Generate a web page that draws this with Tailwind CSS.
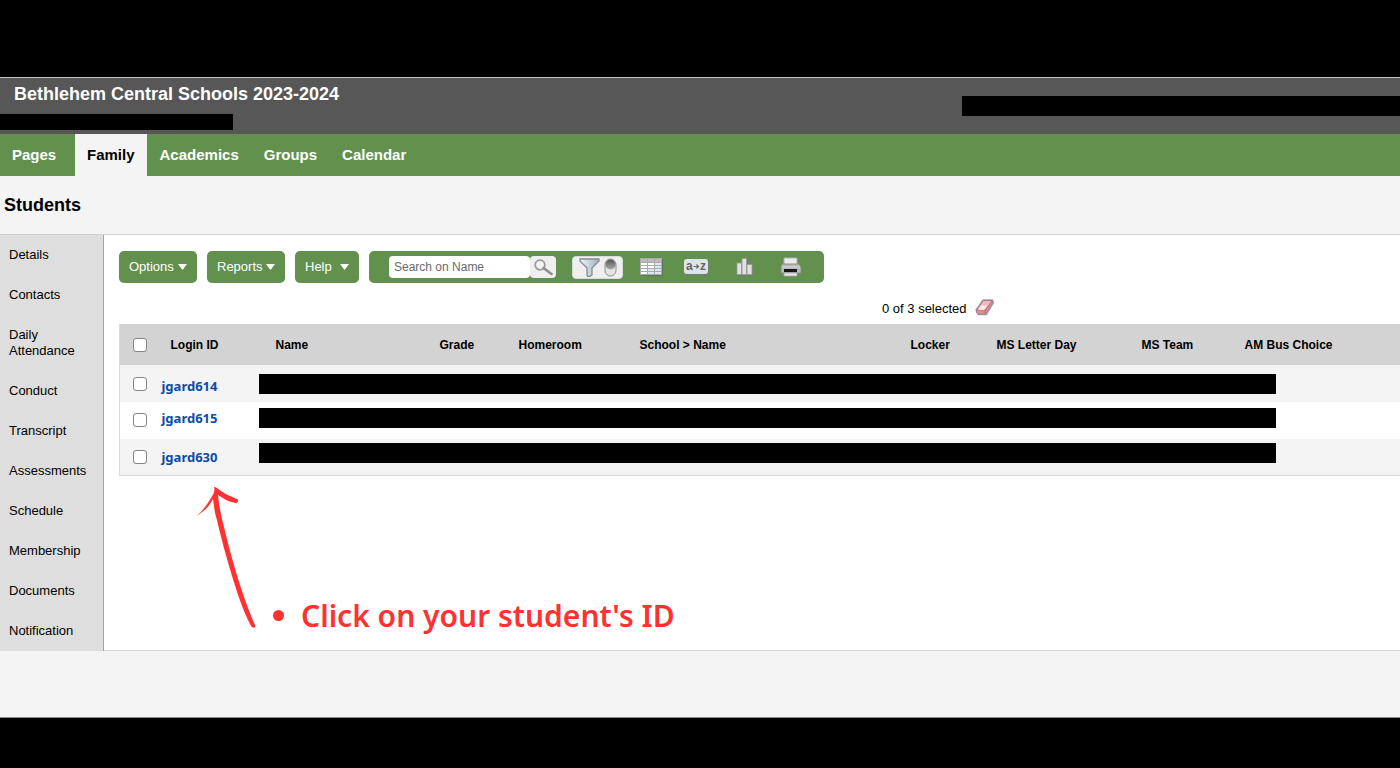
<!DOCTYPE html>
<html lang="en">

<head>
    <meta charset="UTF-8">
    <meta name="viewport" content="width=device-width, initial-scale=1.0">
    <title>Bethlehem Central Schools 2023-2024</title>
    <script src="https://cdn.jsdelivr.net/npm/@tailwindcss/browser@4"></script>
</head>

<body class="bg-black text-black min-h-screen flex flex-col pt-[77px] pb-[50px] font-['Liberation_Sans',Arial,sans-serif]">

    <!-- Header -->
    <header class="bg-[#575757] border-t border-[#c4c4c4] flex justify-between items-start pb-1">
        <div>
            <h1 class="text-white text-[18px] leading-8 font-bold pl-3.5">Bethlehem Central Schools 2023-2024</h1>
            <div class="bg-black w-[233px] h-4 mt-1"></div>
        </div>
        <div class="bg-black w-[438px] h-5 mt-[18px]"></div>
    </header>

    <!-- Top tabs -->
    <nav class="bg-[#62914e] flex text-white text-[15px] leading-[42px] font-bold">
        <a href="#" class="pl-3 w-[75px]">Pages</a>
        <a href="#" class="px-3 bg-[#f4f4f4] text-black">Family</a>
        <a href="#" class="pl-[13px] pr-[25px]">Academics</a>
        <a href="#" class="pr-[25px]">Groups</a>
        <a href="#">Calendar</a>
    </nav>

    <div class="bg-[#f4f4f4] border-b border-[#8a8a8a] grow">
        <h2 class="text-[18px] leading-[58px] font-bold pl-1">Students</h2>

        <div class="flex border-t border-[#cfcfcf]">
            <!-- Side tabs -->
            <nav class="w-[104px] shrink-0 bg-[#dedede] border-r border-[#a3a3a3] text-[13px] leading-4 flex flex-col">
                <a href="#" class="py-3 pl-[9px]">Details</a>
                <a href="#" class="py-3 pl-[9px]">Contacts</a>
                <a href="#" class="py-3 pl-[9px]">Daily Attendance</a>
                <a href="#" class="py-3 pl-[9px]">Conduct</a>
                <a href="#" class="py-3 pl-[9px]">Transcript</a>
                <a href="#" class="py-3 pl-[9px]">Assessments</a>
                <a href="#" class="py-3 pl-[9px]">Schedule</a>
                <a href="#" class="py-3 pl-[9px]">Membership</a>
                <a href="#" class="py-3 pl-[9px]">Documents</a>
                <a href="#" class="py-3 pl-[9px]">Notification</a>
            </nav>

            <main class="grow bg-white border-b border-[#d4d4d4] pt-4 pl-[15px]">
                <!-- Toolbar -->
                <div class="flex gap-2.5 text-[13px] text-white">
                    <button class="bg-[#62914e] rounded-[5px] h-8 w-[78px] flex items-center justify-between px-2.5">Options
                        <svg class="w-[9px] h-[6px]" viewBox="0 0 9 6"><path fill="#fff" d="M0 0h9L4.500 6z" /></svg>
                    </button>
                    <button class="bg-[#62914e] rounded-[5px] h-8 w-[78px] flex items-center justify-between px-2.5">Reports
                        <svg class="w-[9px] h-[6px]" viewBox="0 0 9 6"><path fill="#fff" d="M0 0h9L4.500 6z" /></svg>
                    </button>
                    <button class="bg-[#62914e] rounded-[5px] h-8 w-16 flex items-center justify-between px-2.5">Help
                        <svg class="w-[9px] h-[6px]" viewBox="0 0 9 6"><path fill="#fff" d="M0 0h9L4.500 6z" /></svg>
                    </button>

                    <div class="bg-[#62914e] rounded-[5px] h-8 w-[455px] flex items-center pl-5">
                        <input type="text" aria-label="Search on Name" placeholder="Search on Name"
                            class="bg-white w-[141px] h-[22px] rounded-[4px] px-[5px] text-[12px] text-black placeholder:text-[#6b6b6b]">
                        <button aria-label="Search" class="bg-[#efefef] w-[26px] h-[22px] rounded-[4px] flex items-center justify-center">
                            <svg class="w-5 h-[17px]" viewBox="0 0 20 17">
                                <circle cx="7" cy="6" r="4.800" fill="#f4f4f4" stroke="#9b9b9b" stroke-width="1.800" />
                                <path d="M10.500 9l8 6" stroke="#8e8e8e" stroke-width="2.600" stroke-linecap="round" />
                            </svg>
                        </button>
                        <button aria-label="Filter" class="bg-[#efefef] w-[51px] h-[23px] rounded-[4px] border border-[#dadada] ml-4 flex items-center justify-center gap-1">
                            <svg class="w-[21px] h-[19px]" viewBox="0 0 21 19">
                                <defs>
                                    <linearGradient id="funnel">
                                        <stop offset="0" stop-color="#f3f7f9" />
                                        <stop offset="1" stop-color="#9fb0ba" />
                                    </linearGradient>
                                    <linearGradient id="knob" x2="0" y2="1">
                                        <stop offset="0" stop-color="#555" />
                                        <stop offset="1" stop-color="#aaa" />
                                    </linearGradient>
                                </defs>
                                <path d="M1 1h19v2l-7 7v7l-2 1.300H8.500L8 17v-7L1 3z" fill="url(#funnel)" stroke="#848c90" stroke-width="1.300" />
                            </svg>
                            <svg class="w-[13px] h-[19px]" viewBox="0 0 13 19">
                                <rect x="1" y="1" width="11" height="17" rx="5.500" fill="#e3e3e3" stroke="#8c8c8c" />
                                <circle cx="6.500" cy="6.500" r="5" fill="url(#knob)" />
                            </svg>
                        </button>
                        <button aria-label="Field set" class="ml-[17px]">
                            <svg class="w-6 h-[18px]" viewBox="0 0 24 18">
                                <path d="M1 1h22v17H1z" fill="#62725c" />
                                <path d="M0 0h22v17H0z" fill="#a9aaaa" />
                                <path d="M1 1h6v3H1zM8 1h6v3H8zM15 1h6v3h-6z" fill="#bcbcbc" />
                                <path d="M1 5h6v2H1zM8 5h6v2H8zM1 8h6v2H1zM8 8h6v2H8zM1 11h6v2H1zM1 14h6v2H1z" fill="#fff" />
                                <path d="M15 5h6v2h-6zM15 8h6v2h-6zM8 11h6v2H8zM15 11h6v2h-6zM8 14h6v2H8zM15 14h6v2h-6z" fill="#dbe9f2" />
                            </svg>
                        </button>
                        <button aria-label="Sort order" class="ml-5">
                            <svg class="w-[26px] h-[17px]" viewBox="0 0 26 17">
                                <rect x="1" y="1" width="24" height="16" rx="3" fill="#71806c" />
                                <rect width="24" height="15" rx="3" fill="#dce4e8" />
                                <text x="2" y="11" font-size="12" font-weight="bold" fill="#666">a</text>
                                <path d="M9.500 7.500h5M12.500 5.500l2 2-2 2" fill="none" stroke="#666" stroke-width="1.200" />
                                <text x="16" y="11" font-size="12" font-weight="bold" fill="#666">z</text>
                            </svg>
                        </button>
                        <button aria-label="Charts" class="ml-[26px]">
                            <svg class="w-[18px] h-[18px]" viewBox="0 0 18 18">
                                <path d="M1 6h6V1h6v6h4v11H1z" fill="#6e7e68" />
                                <path d="M1 5h4.500v11.500H1zM6 .5h4.500v16H6zM11 6.500h5v10h-5z" fill="#e2e2e2" stroke="#999" stroke-width=".8" />
                            </svg>
                        </button>
                        <button aria-label="Print" class="ml-[26px]">
                            <svg class="w-[22px] h-5" viewBox="0 0 22 20">
                                <path d="M4 1h13v7H4z" fill="#ececec" stroke="#b0b0b0" />
                                <path d="M2 7h17l2 3v6H1v-6z" fill="#b9b9b9" stroke="#8a8a8a" />
                                <path d="M2 10h18" stroke="#dedede" />
                                <path d="M4 12h13v3H4z" fill="#161616" />
                                <path d="M4 16h13v3H4z" fill="#ececec" stroke="#a8a8a8" />
                            </svg>
                        </button>
                    </div>
                </div>

                <!-- Selection count -->
                <div class="h-[41px] pt-4 pl-[763px] flex gap-2 text-[13px] leading-5">
                    <span>0 of 3 selected</span>
                    <button aria-label="Clear selection" class="self-start">
                        <svg class="w-[19px] h-[17px]" viewBox="0 0 19 17">
                            <path d="M1 11L8 1h9.500l1 3-7 11.500H3z" fill="#dfa3a3" stroke="#9db4d4" stroke-width="1.500" stroke-linejoin="round" />
                            <path d="M1.500 11L8.300 1.500h9L10.500 11z" fill="#efbcbc" stroke="#b47278" />
                            <path d="M1.500 11v2.500l1.800 1.800h7.200V11zM10.500 11l7-9.500v3l-7 10.800z" fill="#d98f92" stroke="#b47278" stroke-width=".8" />
                            <path d="M3 11l3-4.500h6L9 11z" fill="#fbe8e8" />
                        </svg>
                    </button>
                </div>

                <table class="w-full table-fixed border-collapse border-l border-b border-[#dadada] text-left text-[12px]">
                    <colgroup>
                        <col class="w-[41px]">
                        <col class="w-[98px]">
                        <col class="w-[181px]">
                        <col class="w-[79px]">
                        <col class="w-[121px]">
                        <col class="w-[271px]">
                        <col class="w-[86px]">
                        <col class="w-[145px]">
                        <col class="w-[103px]">
                        <col>
                    </colgroup>
                    <thead class="bg-[#d3d3d3]">
                        <tr class="h-[41px]">
                            <th class="pl-[13px]"><input type="checkbox" aria-label="Select all" class="block appearance-none size-3.5 bg-white border border-[#858585] rounded-[3px]"></th>
                            <th class="pl-[10px]">Login ID</th>
                            <th class="pl-[17px]">Name</th>
                            <th>Grade</th>
                            <th>Homeroom</th>
                            <th>School &gt; Name</th>
                            <th>Locker</th>
                            <th>MS Letter Day</th>
                            <th>MS Team</th>
                            <th>AM Bus Choice</th>
                        </tr>
                    </thead>
                    <tbody class="font-['Noto_Sans',sans-serif] text-[13px] leading-5 font-bold text-[#0b4ca8] align-top">
                        <tr class="bg-[#f4f4f4] h-[37px]">
                            <td class="pl-[13px] pt-3"><input type="checkbox" aria-label="Select jgard614" class="block appearance-none size-3.5 bg-white border border-[#858585] rounded-[3px]"></td>
                            <td class="pt-[11px] pl-px"><a href="#">jgard614</a></td>
                            <td colspan="8" class="pt-[9px]"><div class="bg-black h-5 mr-[124px]"></div></td>
                        </tr>
                        <tr class="bg-white h-[37px]">
                            <td class="pl-[13px] pt-[11px]"><input type="checkbox" aria-label="Select jgard615" class="block appearance-none size-3.5 bg-white border border-[#858585] rounded-[3px]"></td>
                            <td class="pt-1.5 pl-px"><a href="#">jgard615</a></td>
                            <td colspan="8" class="pt-1.5"><div class="bg-black h-5 mr-[124px]"></div></td>
                        </tr>
                        <tr class="bg-[#f4f4f4] h-9">
                            <td class="pl-[13px] pt-[11px]"><input type="checkbox" aria-label="Select jgard630" class="block appearance-none size-3.5 bg-white border border-[#858585] rounded-[3px]"></td>
                            <td class="pt-2 pl-px"><a href="#">jgard630</a></td>
                            <td colspan="8" class="pt-1"><div class="bg-black h-5 mr-[124px]"></div></td>
                        </tr>
                    </tbody>
                </table>

                <!-- Instruction -->
                <div class="flex items-end pl-[77px] pt-2.5 pb-5 text-[#ff3131]">
                    <svg class="w-[62px] h-36" viewBox="0 0 62 144" fill="currentColor">
                        <path d="M18 1c2 0 4 2 7 4 6 4 11 6 16 8 2 1 1 4-1 4-7-1-12-4-18-8 1 10 3 21 6 32 5 21 10 39 17 61 4 12 9 26 14 37 1 3-2 4-4 1-8-15-13-31-19-50-6-20-11-38-15-56-3-9-3-16-4-21-4 8-9 12-16 17 5-5 10-11 14-18 3-5 4-7 3-11z" />
                    </svg>
                    <ul class="pl-[15px] font-['Noto_Sans',sans-serif] text-[30px] leading-7 font-semibold">
                        <li class="flex items-center gap-[17px]"><span class="size-[11px] rounded-full bg-[#ff3131]"></span>Click on your student's ID</li>
                    </ul>
                </div>
            </main>
        </div>
    </div>

</body>

</html>
